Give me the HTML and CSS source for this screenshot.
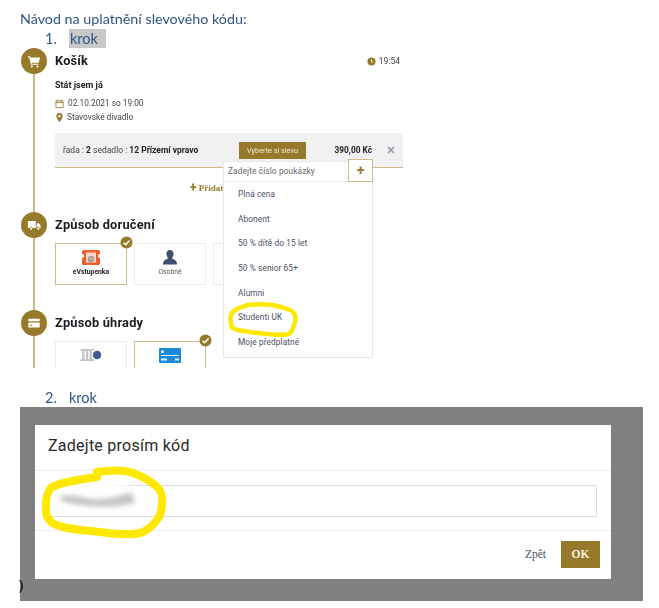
FILE: index.html
```html
<!DOCTYPE html>
<html lang="cs">
<head>
<meta charset="utf-8">
<title>Návod na uplatnění slevového kódu</title>
<link rel="stylesheet" href="styles.css">
</head>
<body>
<main class="page">
  <h1 class="doc-title">Návod na uplatnění slevového kódu:</h1>
  <p class="doc-step"><span class="doc-num">1.</span><mark class="doc-mark">krok</mark></p>

  <section class="checkout">
    <div class="stage stage-cart">
      <div class="rail">
        <span class="rail-dot">
          <svg viewBox="0 0 16 16" class="rail-icon"><path fill="#fff" d="M1 2.500h2.600l.5 1.500H15l-1.600 6H5.200l.3 1H13v1.400H4.400L2.600 3.900H1zM5.500 13a1.200 1.200 0 1 0 0 2.400 1.200 1.200 0 0 0 0-2.400zm6.500 0a1.200 1.200 0 1 0 0 2.400 1.200 1.200 0 0 0 0-2.400z"/></svg>
        </span>
        <span class="rail-line"></span>
      </div>
      <div class="stage-body">
        <header class="stage-head">
          <h2 class="stage-title">Košík</h2>
          <span class="timer">
            <svg viewBox="0 0 10 10" class="timer-icon"><circle cx="5" cy="5" r="4.500" fill="#96792b"/><path d="M5 2.500V5.500H6.800" fill="none" stroke="#fff" stroke-width="1"/></svg>19:54
          </span>
        </header>
        <p class="show-name">Stát jsem já</p>
        <p class="show-meta">
          <svg viewBox="0 0 10 10" class="meta-icon"><path fill="none" stroke="#96792b" stroke-width=".9" d="M1 2h8v7.500H1zM1 4h8M3 .5V3M7 .5V3"/></svg>02.10.2021 so 19:00
        </p>
        <p class="show-meta show-venue">
          <svg viewBox="0 0 10 10" class="meta-icon"><path fill-rule="evenodd" fill="#96792b" d="M5 0a3.500 3.500 0 0 1 3.500 3.500C8.500 6 5 10 5 10S1.500 6 1.500 3.500A3.500 3.500 0 0 1 5 0zm0 2.200a1.300 1.300 0 1 0 0 2.600 1.300 1.300 0 0 0 0-2.600z"/></svg>Stavovské divadlo
        </p>
        <div class="seat">
          <span class="seat-text">řada : <b>2</b> sedadlo : <b>12 Přízemí vpravo</b></span>
          <span class="seat-btn">Vyberte si slevu</span>
          <b class="seat-price">390,00 Kč</b>
          <svg viewBox="0 0 8 8" class="seat-close"><path d="M1 1l6 6M7 1L1 7" stroke="#8d95a5" stroke-width="1.500"/></svg>
        </div>
        <div class="add-row"><b class="add-plus">+</b> Přidat</div>
      </div>
    </div>

    <div class="stage stage-delivery">
      <div class="rail">
        <span class="rail-dot">
          <svg viewBox="0 0 16 16" class="rail-icon"><path fill="#fff" d="M1 3.500h9v8H6.500a1.800 1.800 0 0 0-3.400 0H1zM11 6h2.500L15.500 8.500v3h-.8a1.800 1.800 0 0 0-3.400 0H11zM4.800 11a1.300 1.300 0 1 0 0 2.600 1.300 1.300 0 0 0 0-2.600zM13 11a1.300 1.300 0 1 0 0 2.600 1.300 1.300 0 0 0 0-2.600z"/></svg>
        </span>
        <span class="rail-line"></span>
      </div>
      <div class="stage-body">
        <h2 class="stage-title">Způsob doručení</h2>
        <div class="cards">
          <div class="card card-on">
            <svg viewBox="0 0 18 15" class="card-icon"><path fill="#f0602e" d="M1 0h16a1 1 0 0 0 1 1v3a2 2 0 0 0 0 4v6a1 1 0 0 0-1 1H1a1 1 0 0 0-1-1V8a2 2 0 0 0 0-4V1a1 1 0 0 0 1-1z"/><rect x="4" y="2.500" width="10" height="10" fill="#f7d8ca"/><text x="9" y="10.500" class="ticket-at">@</text></svg>
            <span class="card-label card-label-on">eVstupenka</span>
            <svg viewBox="0 0 14 14" class="badge"><circle cx="7" cy="7" r="6.500" fill="#96792b"/><path d="M3.800 7.200l2.300 2.200 4.200-4.600" fill="none" stroke="#fff" stroke-width="1.600"/></svg>
          </div>
          <div class="card">
            <svg viewBox="0 0 18 16" class="card-icon card-icon-person"><path fill="#3f4f70" d="M9 0c2.300 0 3.800 1.700 3.800 4S11.600 8 11 9c2 1 5.500 1.500 5.500 6.500H1.500C1.500 10.500 5 10 7 9 6.400 8 5.200 6.300 5.200 4S6.700 0 9 0z"/></svg>
            <span class="card-label">Osobně</span>
          </div>
          <div class="card"></div>
        </div>
      </div>
    </div>

    <div class="stage stage-payment">
      <div class="rail">
        <span class="rail-dot">
          <svg viewBox="0 0 16 16" class="rail-icon"><path fill-rule="evenodd" fill="#fff" d="M1.500 3h13v10h-13zM1.500 6v1.500h13V6zM3 10v1h3v-1z"/></svg>
        </span>
        <span class="rail-line"></span>
      </div>
      <div class="stage-body">
        <h2 class="stage-title">Způsob úhrady</h2>
        <div class="cards">
          <div class="card">
            <svg viewBox="0 0 24 14" class="card-icon card-icon-bank"><path fill="#c4c4c4" d="M0 1h15v2H0zM0 12h15v2H0zM2 3h2.500v9H2zM6 3h2.500v9H6zM10 3h2.500v9H10z"/><circle cx="18" cy="7.500" r="4.500" fill="#3f5a8c"/></svg>
          </div>
          <div class="card card-on">
            <svg viewBox="0 0 22 15" class="card-icon card-icon-pay"><rect width="22" height="15" rx="1" fill="#1c88d8"/><path fill="#e6f3fc" d="M2 2.500h3v2.500H2zM2 7h18v1H2zM2 10.500h6v2H2zM16 10.500h4v2h-4z"/></svg>
            <svg viewBox="0 0 14 14" class="badge"><circle cx="7" cy="7" r="6.500" fill="#96792b"/><path d="M3.800 7.200l2.300 2.200 4.200-4.600" fill="none" stroke="#fff" stroke-width="1.600"/></svg>
          </div>
        </div>
      </div>
    </div>

    <div class="discount">
      <div class="discount-input">
        <span class="discount-hint">Zadejte číslo poukázky</span>
        <span class="discount-add">+</span>
      </div>
      <ul class="discount-list">
        <li>Plná cena</li>
        <li>Abonent</li>
        <li>50 % dítě do 15 let</li>
        <li>50 % senior 65+</li>
        <li>Alumni</li>
        <li>Studenti UK</li>
        <li>Moje předplatné</li>
      </ul>
      <svg class="scribble-small" viewBox="0 0 72 37"><path fill="none" stroke="#ffe800" stroke-width="4.500" stroke-linecap="round" stroke-linejoin="round" d="M19 4C30 3 42 3 49 5S62 8 65 11 68 17 67 21 65 29 62 32 50 34 39 33 18 31 10 29 4 26 3 22 2 15 4 12 9 8 14 6 17 5 20 4"/></svg>
    </div>
  </section>

  <p class="doc-step doc-step-two"><span class="doc-num">2.</span>krok</p>

  <section class="overlay">
    <span class="stray">)</span>
    <div class="dialog">
      <h2 class="dialog-title">Zadejte prosím kód</h2>
      <div class="dialog-body"><div class="dialog-input"></div></div>
      <footer class="dialog-foot">
        <span class="dialog-back">Zpět</span>
        <span class="dialog-ok">OK</span>
      </footer>
    </div>
    <svg class="scribble-big" viewBox="0 0 130 75">
      <ellipse class="smudge-white" cx="55" cy="30" rx="42" ry="14"/>
      <path class="smudge-grey" d="M20 31C40 28 45 36 62 34S85 28 92 28L95 38C70 44 40 42 22 36z"/>
      <path fill="none" stroke="#ffe800" stroke-width="8" stroke-linecap="round" stroke-linejoin="round" d="M57 7C70 5 85 5 93 8S112 17 117 22 123 33 122 40 121 50 117 55 108 66 100 68 75 69 60 67 35 65 23 62 11 57 8 53 5 35 8 28 12 22 17 20 40 14 57 12"/>
    </svg>
  </section>
</main>
</body>
</html>
```

FILE: styles.css
```css
* { box-sizing: border-box; }
html, body { margin: 0; background: #fff; }
body { width: 659px; height: 608px; overflow: hidden; font-family: Roboto, "Liberation Sans", sans-serif; color: #333; }
.page { padding-left: 20px; filter: blur(.35px); }
p, h1, h2, ul { margin: 0; padding: 0; }

.doc-title { padding-top: 9px; height: 29px; font: 400 14.300px/20px Lato, "Open Sans", sans-serif; color: #2f5485; white-space: nowrap; }
.doc-step { display: flex; height: 19px; margin-left: 25px; font: 400 14.500px/20px Lato, "Open Sans", sans-serif; color: #2f5485; }
.doc-num { width: 24px; }
.doc-mark { display: block; width: 37px; padding-left: 1px; background: #c8c8c8; color: #2f5485; }
.doc-step-two { margin-top: 21px; height: 18px; line-height: 18px; }

.checkout { position: relative; width: 385px; height: 320px; margin-left: 1px; overflow: hidden; }
.stage { display: flex; gap: 8px; }
.stage-cart { height: 164px; }
.stage-delivery { height: 98px; }
.stage-payment { height: 58px; }
.rail { display: flex; flex-direction: column; align-items: center; width: 26px; flex: none; }
.rail-dot { display: flex; align-items: center; justify-content: center; width: 26px; height: 26px; flex: none; border-radius: 50%; background: #96792b; }
.rail-icon { width: 14px; height: 14px; }
.rail-line { flex: 1; width: 2px; background: #cdb985; }
.stage-body { width: 348px; }
.stage-head { display: flex; justify-content: space-between; align-items: center; padding-right: 3px; }
.stage-title { font-size: 12.800px; font-weight: 700; line-height: 25px; height: 26px; color: #1c1c22; letter-spacing: .2px; }
.timer { display: flex; align-items: center; gap: 3px; font-size: 8.500px; color: #444; }
.timer-icon { width: 9px; height: 9px; }
.show-name { margin-top: 4px; font-size: 9px; font-weight: 700; line-height: 14px; color: #222; }
.show-meta { display: flex; align-items: center; gap: 4px; margin-top: 4px; font-size: 8.300px; line-height: 14px; color: #444; }
.show-venue { margin-top: 0; gap: 3px; }
.meta-icon { width: 9px; height: 9px; }

.seat { display: flex; align-items: center; height: 35px; margin-top: 9px; padding-left: 8px; background: #f1f1f1; border-bottom: 1px solid #cdbb8a; font-size: 8.500px; color: #444; }
.seat-text { width: 176px; white-space: nowrap; }
.seat-text b { color: #222; }
.seat-btn { width: 67px; height: 17px; font-size: 7.300px; line-height: 17px; text-align: center; color: #f1ead6; background: #96792b; }
.seat-price { width: 66px; font-size: 8.300px; text-align: right; color: #222; }
.seat-close { width: 8px; height: 8px; margin-left: 15px; }
.add-row { height: 38px; padding-left: 135px; font: 700 9px/38px "Liberation Serif", serif; color: #96792b; }
.add-plus { font-family: Roboto, sans-serif; font-size: 12px; }

.cards { display: flex; gap: 7px; margin-top: 5px; }
.card { position: relative; display: flex; flex-direction: column; align-items: center; flex: none; width: 72px; height: 42px; padding-top: 6px; background: #fff; border: 1px solid #ececec; }
.card-on { border-color: #cdbb8a; }
.stage-payment .card { height: 60px; }
.card-icon { width: 18px; height: 15px; }
.card-icon-person { margin-bottom: 0; }
.card-icon-bank { width: 23px; height: 13px; }
.card-icon-pay { width: 22px; height: 15px; }
.card-label { margin-top: 3px; font-size: 6.800px; line-height: 9px; color: #555; }
.card-label-on { font-weight: 700; color: #222; }
.ticket-at { font-size: 8px; font-weight: 700; text-anchor: middle; fill: #777; }
.badge { position: absolute; top: -8px; right: -7px; width: 13px; height: 13px; }

.discount { position: absolute; left: 202px; top: 113px; width: 150px; height: 197px; background: #fff; border: 1px solid #e8e8e8; }
.discount-input { display: flex; align-items: center; justify-content: space-between; height: 20px; padding-left: 4px; border-bottom: 1px solid #eee; font-size: 8.300px; color: #666; }
.discount-hint { letter-spacing: .12px; margin-top: -2px; }
.discount-add { width: 25px; height: 23px; margin: -2px -1px 0 0; font-size: 14px; font-weight: 700; line-height: 20px; text-align: center; color: #96792b; background: #fff; border: 1px solid #cdbb8a; }
.discount-list { margin-top: 0; padding: 0 0 0 14px; list-style: none; font-size: 8.300px; letter-spacing: .1px; color: #4a5063; }
.discount-list li { height: 24.700px; line-height: 24.700px; }
.scribble-small { position: absolute; left: 4px; top: 139px; width: 72px; height: 37px; }

.overlay { position: relative; width: 623px; height: 194px; padding: 18px 32px 22px 15px; background: #808080; }
.stray { position: absolute; left: -1px; top: 172px; font-size: 13px; font-weight: 700; line-height: 14px; color: #111; }
.dialog { display: flex; flex-direction: column; height: 154px; background: #fff; }
.dialog-title { height: 46px; padding-left: 13px; border-bottom: 1px solid #eee; font-size: 16px; font-weight: 400; line-height: 42px; color: #2a2a2a; letter-spacing: .25px; }
.dialog-body { height: 60px; padding: 14px 14px 0 13px; border-bottom: 1px solid #eee; }
.dialog-input { height: 32px; border: 1px solid #dcdcdc; }
.dialog-foot { display: flex; flex: 1; align-items: center; justify-content: flex-end; gap: 15px; padding: 0 11px 2px 0; }
.dialog-back { font: 400 11.500px "Liberation Serif", serif; color: #4a5063; }
.dialog-ok { width: 39px; height: 27px; font: 700 11.500px/27px "Liberation Serif", serif; text-align: center; color: #f5f0df; background: #96792b; }
.scribble-big { position: absolute; left: 20px; top: 58px; width: 130px; height: 75px; overflow: visible; }
.smudge-white { fill: #fff; filter: blur(3px); }
.smudge-grey { fill: #c4c4c4; filter: blur(2.500px); }
```
